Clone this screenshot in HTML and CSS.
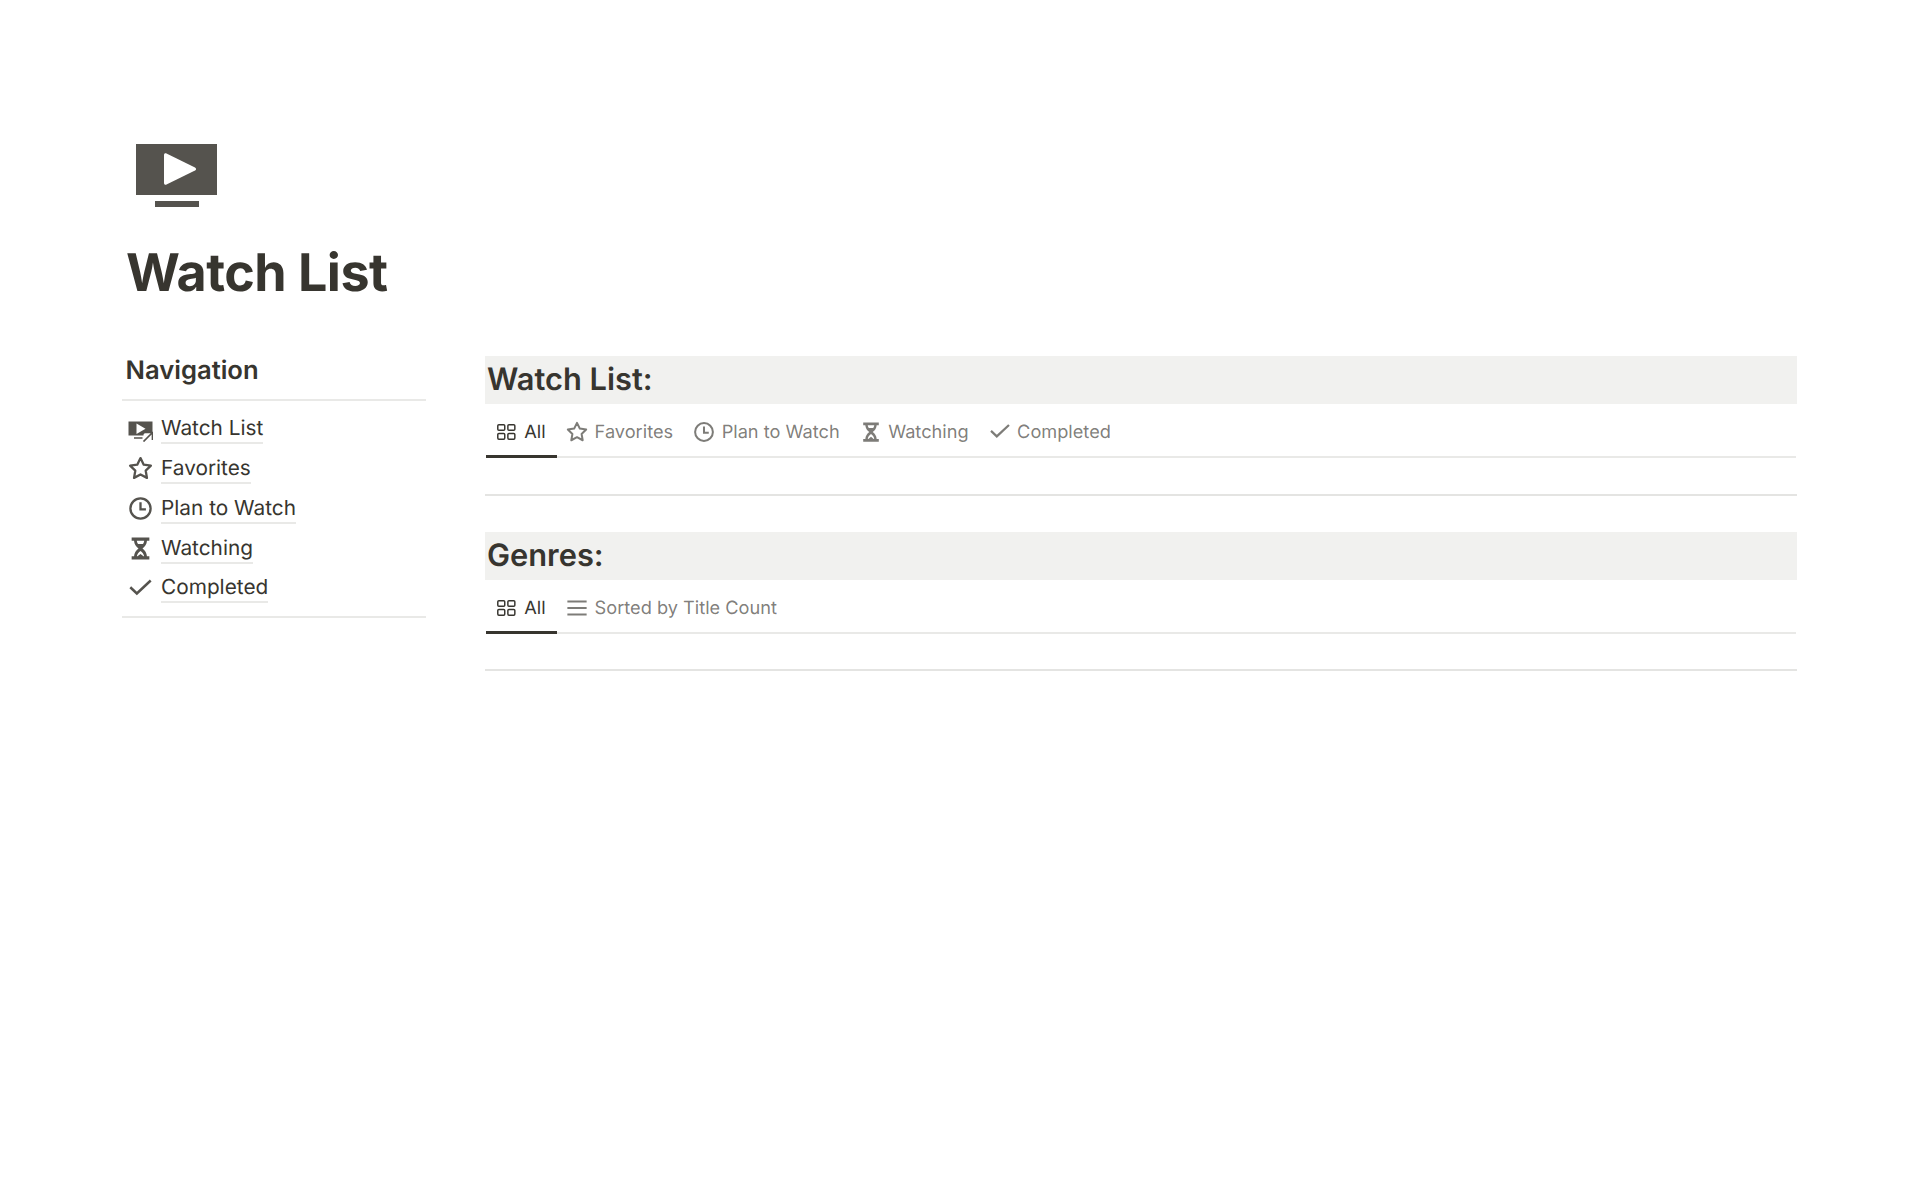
FILE: index.html
```html
<!DOCTYPE html>
<html lang="en">
<head>
    <meta charset="UTF-8">
    <meta name="viewport" content="width=device-width, initial-scale=1.0">
    <title>Watch List</title>
    <link rel="stylesheet" href="styles.css">
</head>
<body>
    <svg class="icon-defs" aria-hidden="true">
        <symbol id="i-star" viewBox="0 0 24 24">
            <path d="M12 2l3.100 6.300 6.900 1-5 4.800 1.200 6.900-6.200-3.300-6.200 3.300 1.200-6.900-5-4.800 6.900-1z" fill="none" stroke="currentColor" stroke-width="2.200" stroke-linejoin="round"/>
        </symbol>
        <symbol id="i-clock" viewBox="0 0 24 24">
            <circle cx="12" cy="12" r="9.700" fill="none" stroke="currentColor" stroke-width="2.200"/>
            <path d="M12 6v6.800h5.200" fill="none" stroke="currentColor" stroke-width="2.200"/>
        </symbol>
        <symbol id="i-hourglass" viewBox="0 0 24 24">
            <path d="M3.500 1.500h17v3h-2.300c-.2 3.300-2 5.700-4.300 7.500 2.300 1.800 4.100 4.200 4.300 7.500h2.300v3h-17v-3h2.300c.2-3.300 2-5.700 4.300-7.500C7.800 10.200 6 7.800 5.800 4.500H3.500z" fill="currentColor"/>
            <path d="M8.400 4.500h7.200c-.2 1.200-.6 2.200-1.200 3.100H9.600c-.6-.9-1-1.900-1.200-3.100z" fill="#fff"/>
            <path d="M12 14.300c-1.700 1.200-3.200 3-3.500 5.200h.6l2.900-2.300 2.900 2.300h.6c-.3-2.200-1.800-4-3.500-5.200z" fill="#fff"/>
        </symbol>
        <symbol id="i-check" viewBox="0 0 24 24">
            <path d="M2.200 10.800l6.300 6L21.800 4.300" fill="none" stroke="currentColor" stroke-width="2.400"/>
        </symbol>
        <symbol id="i-grid" viewBox="0 0 24 24">
            <rect x="1.950" y="4" width="7.600" height="6.200" rx="1.200" fill="none" stroke="currentColor" stroke-width="1.600"/>
            <rect x="12.950" y="4" width="7.600" height="6.200" rx="1.200" fill="none" stroke="currentColor" stroke-width="1.600"/>
            <rect x="1.950" y="13.600" width="7.600" height="6.200" rx="1.200" fill="none" stroke="currentColor" stroke-width="1.600"/>
            <rect x="12.950" y="13.600" width="7.600" height="6.200" rx="1.200" fill="none" stroke="currentColor" stroke-width="1.600"/>
        </symbol>
        <symbol id="i-lines" viewBox="0 0 24 24">
            <path d="M1.500 5h21M1.500 12h21M1.500 19h21" fill="none" stroke="currentColor" stroke-width="2.200"/>
        </symbol>
    </svg>

    <div class="page">
        <div class="page-icon">
            <svg viewBox="0 0 81 63" width="81" height="63">
                <rect x="0" y="0" width="81" height="51" fill="#55534e"/>
                <path d="M28 11c0-1.500 1.200-2.200 2.500-1.600l28.500 14c1.400.7 1.400 2.500 0 3.200l-28.500 14c-1.300.6-2.500-.1-2.500-1.600z" fill="#fff"/>
                <rect x="19" y="57" width="44" height="6" fill="#55534e"/>
            </svg>
        </div>
        <h1 class="page-title">Watch List</h1>

        <div class="columns">
            <div class="sidebar">
                <h2 class="nav-title">Navigation</h2>
                <ul class="nav-list">
                    <li class="nav-item">
                        <svg class="nav-icon" viewBox="0 0 25 25">
                            <path d="M.5 4.500h24v14H.5z" fill="#55534e"/>
                            <path d="M8.500 6.500v10.500l9-5.200z" fill="#fff"/>
                            <path d="M11.500 25l4-4v-3.500l2-2h7.500v9.500h-13.500z" fill="#fff"/>
                            <path d="M6 21h8.500M15.500 24.500l8.500-8.500M17 15.500h7.500V23" fill="none" stroke="#55534e" stroke-width="1.700"/>
                        </svg>
                        <a href="#" class="nav-link">Watch List</a>
                    </li>
                    <li class="nav-item">
                        <svg class="nav-icon"><use href="#i-star"/></svg>
                        <a href="#" class="nav-link">Favorites</a>
                    </li>
                    <li class="nav-item">
                        <svg class="nav-icon"><use href="#i-clock"/></svg>
                        <a href="#" class="nav-link">Plan to Watch</a>
                    </li>
                    <li class="nav-item">
                        <svg class="nav-icon"><use href="#i-hourglass"/></svg>
                        <a href="#" class="nav-link">Watching</a>
                    </li>
                    <li class="nav-item">
                        <svg class="nav-icon"><use href="#i-check"/></svg>
                        <a href="#" class="nav-link">Completed</a>
                    </li>
                </ul>
            </div>

            <div class="content">
                <section class="db-section">
                    <h2 class="db-title">Watch List:</h2>
                    <div class="tabs">
                        <div class="tab active"><svg class="tab-icon"><use href="#i-grid"/></svg>All</div>
                        <div class="tab"><svg class="tab-icon"><use href="#i-star"/></svg>Favorites</div>
                        <div class="tab"><svg class="tab-icon"><use href="#i-clock"/></svg>Plan to Watch</div>
                        <div class="tab"><svg class="tab-icon"><use href="#i-hourglass"/></svg>Watching</div>
                        <div class="tab"><svg class="tab-icon"><use href="#i-check"/></svg>Completed</div>
                    </div>
                </section>
                <section class="db-section">
                    <h2 class="db-title">Genres:</h2>
                    <div class="tabs">
                        <div class="tab active"><svg class="tab-icon"><use href="#i-grid"/></svg>All</div>
                        <div class="tab"><svg class="tab-icon"><use href="#i-lines"/></svg>Sorted by Title Count</div>
                    </div>
                </section>
            </div>
        </div>
    </div>
</body>
</html>
```

FILE: styles.css
```css
* {
    box-sizing: border-box;
}
body {
    margin: 0;
    background-color: white;
    color: #37352f;
    font-family: Inter, "Noto Sans", sans-serif;
    text-rendering: geometricPrecision;
}
.icon-defs {
    display: none;
}
.page {
    padding: 144px 123px 0 122px;
}
.page-icon {
    height: 63px;
    margin-left: 14px;
}
.page-icon svg {
    display: block;
}
.page-title {
    margin: 36px 0 0 4px;
    font-size: 52px;
    font-weight: 700;
    line-height: 60px;
    letter-spacing: -0.5px;
}
.columns {
    display: flex;
    gap: 59px;
    margin-top: 50px;
}
.sidebar {
    width: 304px;
    flex-shrink: 0;
}
.nav-title {
    margin: 0 0 0 3.500px;
    font-size: 25.600px;
    font-weight: 600;
    line-height: 36px;
}
.nav-list {
    list-style: none;
    margin: 10px 0 0;
    padding: 9.300px 0 6.700px;
    border-top: 2px solid #e9e9e7;
    border-bottom: 2px solid #e9e9e7;
}
.nav-item {
    display: flex;
    align-items: center;
    height: 39.800px;
    padding-left: 6px;
}
.nav-icon {
    width: 25px;
    height: 25px;
    margin-right: 8px;
    margin-bottom: 2px;
    color: #55534e;
    flex-shrink: 0;
}
.nav-link {
    color: #37352f;
    font-size: 20.800px;
    font-weight: 400;
    line-height: 26px;
    text-decoration: none;
    border-bottom: 2px solid #e9e9e7;
}
.content {
    flex: 1;
    min-width: 0;
    margin-top: 3px;
}
.db-section {
    padding-bottom: 35.500px;
    margin-bottom: 36px;
    border-bottom: 2px solid #e4e4e2;
}
.db-title {
    margin: 0;
    padding: 0 2px;
    background-color: #f1f1ef;
    font-size: 30.800px;
    font-weight: 600;
    line-height: 48px;
}
.tabs {
    display: flex;
    height: 54px;
    margin: 0 1px;
    border-bottom: 2px solid #e9e9e7;
}
.tab {
    display: flex;
    align-items: center;
    gap: 6.500px;
    height: 54px;
    padding: 2px 9.750px 0 10.250px;
    color: rgba(55, 53, 47, 0.65);
    font-size: 18.200px;
}
.tab.active {
    gap: 6px;
    padding-right: 11.250px;
    margin-right: -1px;
    color: #37352f;
    box-shadow: inset 0 -3px 0 #37352f;
}
.tab-icon {
    width: 22px;
    height: 22px;
    flex-shrink: 0;
}
```
